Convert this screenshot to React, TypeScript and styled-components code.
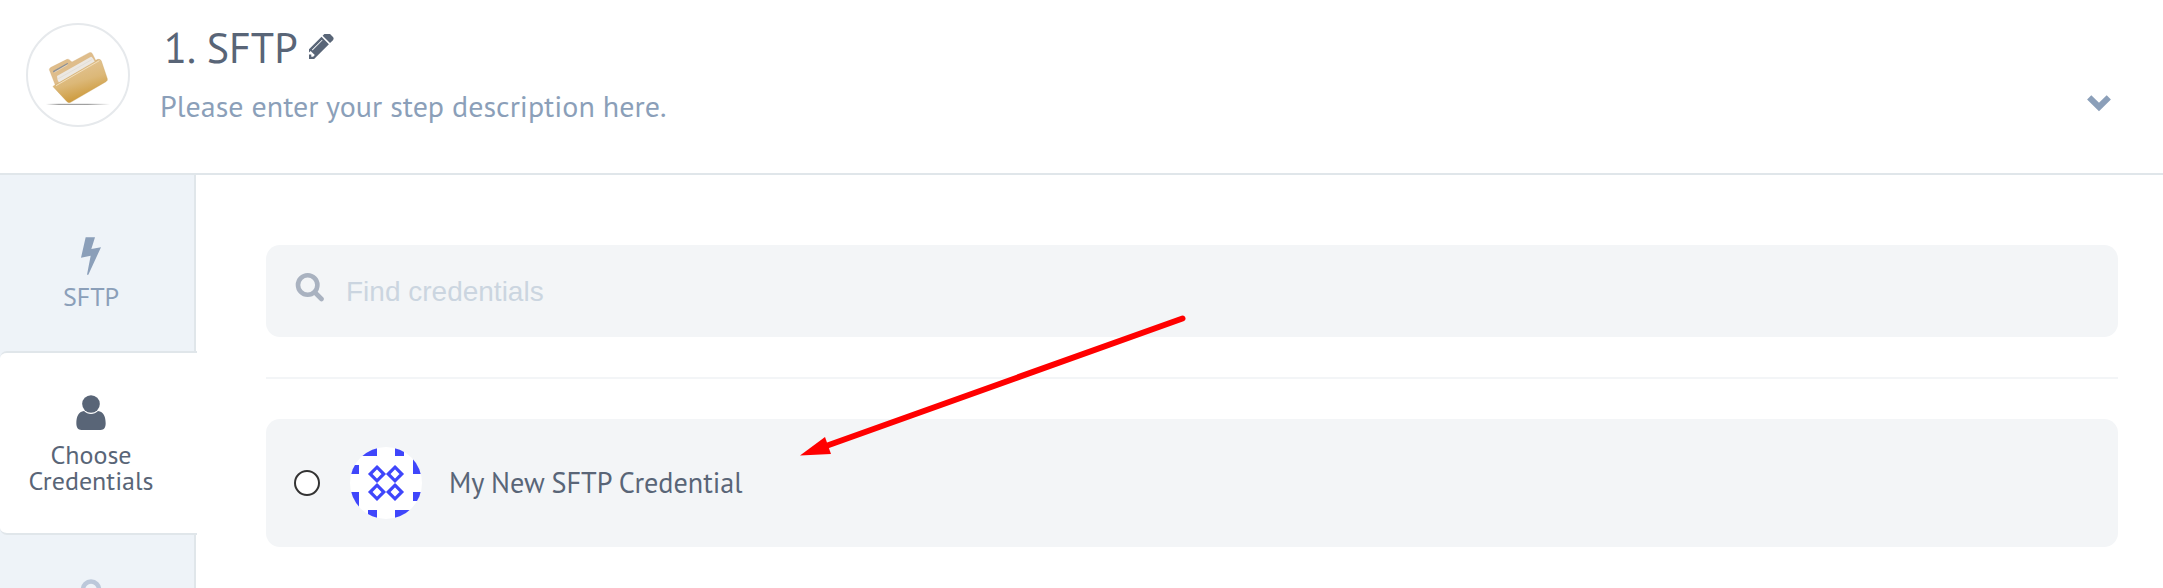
import React from "react";
import styled, { createGlobalStyle } from "styled-components";

const GlobalStyle = createGlobalStyle`
  *, *::before, *::after { box-sizing: border-box; }
  body { margin: 0; background: #fff; font-family: "PT Sans", "Noto Sans", sans-serif; }
`;

const Page = styled.div`
  position: relative;
  display: flex;
  flex-direction: column;
  height: 588px;
  overflow: hidden;
  background: #fff;
`;

const Header = styled.header`
  display: flex;
  align-items: flex-start;
  flex: none;
  height: 175px;
  padding: 23px 51px 0 26px;
  border-bottom: 2px solid #e0e6ea;
`;

const StepLogo = styled.div`
  display: flex;
  flex: none;
  width: 104px;
  height: 104px;
  padding: 25px 0 0 18px;
  border: 2px solid #e6e9ec;
  border-radius: 50%;
`;

const StepText = styled.div`
  flex: 1;
  padding-left: 30px;
`;

const TitleRow = styled.div`
  display: flex;
  height: 52px;
  padding-left: 4px;
`;

const Label = styled.span<{ $size: number; $line: number }>`
  display: block;
  font-size: ${(p) => p.$size}px;
  line-height: ${(p) => p.$line}px;
  white-space: nowrap;
`;

const Title = styled(Label)`
  width: 145px;
  color: #596577;
  word-spacing: 3px;
`;

const Description = styled(Label)`
  margin-top: 8px;
  color: #8b9fb9;
`;

const EditButton = styled.span`
  display: block;
  padding-top: 11px;
`;

const Toggle = styled.span`
  display: block;
  padding-top: 72px;
`;

const Body = styled.div`
  display: flex;
  flex: 1;
  min-height: 0;
`;

const Sidebar = styled.nav`
  display: flex;
  flex-direction: column;
  flex: none;
  width: 197px;
`;

const Tab = styled.div<{ $height: number; $top: number; $active?: boolean }>`
  display: flex;
  flex: none;
  flex-direction: column;
  align-items: center;
  width: ${(p) => (p.$active ? 197 : 196)}px;
  height: ${(p) => p.$height}px;
  padding: ${(p) => p.$top}px ${(p) => (p.$active ? 15 : 12)}px 0 0;
  background: ${(p) => (p.$active ? "#fff" : "#eef3f8")};
  color: ${(p) => (p.$active ? "#596577" : "#8b9fb9")};
  border: 0 solid #e0e6ea;
  border-width: ${(p) => (p.$active ? "2px 0" : "0 2px 0 0")};
  border-radius: ${(p) => (p.$active ? "7px 0 0 7px" : "0")};
`;

const TabLabel = styled(Label)<{ $gap: number }>`
  margin-top: ${(p) => p.$gap}px;
  text-align: center;
`;

const SidebarFill = styled.div`
  display: flex;
  flex-direction: column;
  background: linear-gradient(to right, #eef3f8 194px, #e0e6ea 194px, #e0e6ea 196px, #fff 196px);
`;

const Main = styled.main`
  display: flex;
  flex: 1;
  flex-direction: column;
  padding: 70px 45px 0 69px;
`;

const SearchBox = styled.label`
  display: flex;
  height: 92px;
  padding: 27px 29px 0;
  border-radius: 14px;
  background: #f3f5f7;
`;

const SearchInput = styled.input`
  flex: 1;
  height: 40px;
  margin-left: 21px;
  padding: 0;
  border: 0;
  outline: 0;
  background: transparent;
  font: 28px "Liberation Sans", Arial, sans-serif;
  &::placeholder { color: #cbd5e0; opacity: 1; }
`;

const Divider = styled.hr`
  width: 100%;
  height: 2px;
  margin: 40px 0;
  border: 0;
  background: #f3f5f7;
`;

const CredentialCard = styled.div`
  display: flex;
  align-items: center;
  height: 128px;
  padding-left: 28px;
  border-radius: 14px;
  background: #f3f5f7;
`;

const Radio = styled.span`
  width: 26px;
  height: 26px;
  margin-right: 30px;
  border: 2px solid #333;
  border-radius: 50%;
  background: #fff;
`;

const CredentialName = styled(Label)`
  margin-left: 27px;
  color: #596577;
`;

const Pointer = styled.svg`
  position: absolute;
  left: 780px;
  top: 300px;
  pointer-events: none;
`;

const FolderIcon = () => (
  <svg width="64" height="56" viewBox="138 150 192 168">
    <defs>
      <linearGradient id="front" x1="0.35" y1="0.1" x2="0.65" y2="0.9">
        <stop offset="0" stopColor="#e3c494" />
        <stop offset="0.5" stopColor="#dcb878" />
        <stop offset="1" stopColor="#cc9838" />
      </linearGradient>
      <linearGradient id="shade" x1="0" x2="1" y1="0" y2="0">
        <stop offset="0" stopColor="#888" stopOpacity="0" />
        <stop offset="0.2" stopColor="#8d8d8d" />
        <stop offset="0.65" stopColor="#8d8d8d" />
        <stop offset="1" stopColor="#888" stopOpacity="0" />
      </linearGradient>
    </defs>
    <rect x="138" y="311.500" width="192" height="3" fill="url(#shade)" />
    <path d="M148 209q0-4 5-7l48-24q6-2 10 4l5 4 52-28q6-2 9 3l10 20 8-4 4 10-130 76z" fill="#dfbd8b" stroke="#d0aa72" strokeWidth="1" />
    <path d="M160 212l42-23q4 0 1 4l-40 24q-6 0-3-5z" fill="#8d9095" />
    <path d="M163 217l40-23" stroke="#f2eee8" strokeWidth="1.5" />
    <path d="M171 228l102-58q4 0 12 16l-108 62q-6-8-6-20z" fill="#ece8e2" />
    <path d="M175 236l102-58" stroke="#d9d4cd" strokeWidth="1.5" />
    <path d="M160 258l135-79q6-3 9 4l18 53q2 5-4 9l-106 62q-6 3-11-2l-39-42q-4-3-2-5z" fill="url(#front)" stroke="#c9a05c" strokeWidth="1" />
    <path d="M168 257l130-75" stroke="#f2dfbd" strokeWidth="3" />
  </svg>
);

const PencilIcon = () => (
  <svg width="25" height="25" viewBox="256 256 1408 1408" fill="#596577">
    <path d="M491 1536l91-91-235-235-91 91v107h128v128h107zm523-928q0-22-22-22-10 0-17 7l-542 542q-7 7-7 17 0 22 22 22 10 0 17-7l542-542q7-7 7-17zm-54-192l416 416-832 832h-416v-416zm683 96q0 53-37 90l-166 166-416-416 166-165q36-38 90-38 53 0 91 38l235 234q37 39 37 91z" />
  </svg>
);

const ChevronIcon = () => (
  <svg width="26" height="18" viewBox="0 0 26 18">
    <path d="M3.200 2.400L13 12L22.800 2.400" fill="none" stroke="#8b9fb9" strokeWidth="6" />
  </svg>
);

const BoltIcon = () => (
  <svg width="20" height="38" viewBox="243 201 60 114">
    <path d="M257 201.500H285L274 237L303 231.500L265 314.500H261L272 257L243 263.500z" fill="#8b9fb9" />
  </svg>
);

const UserIcon = () => (
  <svg width="30" height="35" viewBox="228 75 90 105">
    <path d="M252 123C258 129 265 132 273 132S288 129 294 123C311 125 317 140 317 160C317 173 312 180 302 180H244C234 180 229 173 229 160C229 140 235 125 252 123Z" fill="#596577" />
    <circle cx="273" cy="102" r="26.500" fill="#596577" />
  </svg>
);

const SearchIcon = () => (
  <svg width="30" height="30" viewBox="0 0 30 30" fill="none" stroke="#a9b2c0" strokeLinecap="round">
    <circle cx="12.700" cy="13" r="9.700" strokeWidth="4.600" />
    <path d="M20 20.500L26.500 27" strokeWidth="4.600" />
  </svg>
);

const LockIcon = () => (
  <svg width="22" height="30" viewBox="0 0 22 30">
    <path d="M3 16V10.500a8 8 0 0 1 16 0V16" fill="none" stroke="#bcc8da" strokeWidth="4.500" />
  </svg>
);

const diamonds = [[27, 27], [45, 27], [27, 45], [45, 45]];
const squares = [[9, 0], [18, 0], [45, 0], [0, 18], [63, 9], [63, 18], [0, 45], [0, 54], [63, 45], [18, 63], [45, 63], [54, 63]];

const Identicon = () => (
  <svg width="72" height="72" viewBox="0 0 72 72">
    <clipPath id="avatar"><circle cx="36" cy="36" r="36" /></clipPath>
    <g clipPath="url(#avatar)">
      <rect width="72" height="72" fill="#fff" />
      {squares.map(([x, y]) => <rect key={`${x}-${y}`} x={x} y={y} width="9" height="9" fill="#3f46fb" />)}
      {diamonds.map(([x, y]) => (
        <path key={`${x}-${y}`} d={`M${x} ${y - 6.8}l6.800 6.800l-6.800 6.800l-6.800-6.800z`} fill="none" stroke="#3f46fb" strokeWidth="3.200" />
      ))}
    </g>
  </svg>
);

export default function App() {
  return (
    <Page>
      <GlobalStyle />
      <Header>
        <StepLogo><FolderIcon /></StepLogo>
        <StepText>
          <TitleRow>
            <Title $size={42} $line={50}>1. SFTP</Title>
            <EditButton><PencilIcon /></EditButton>
          </TitleRow>
          <Description $size={30} $line={46}>Please enter your step description here.</Description>
        </StepText>
        <Toggle><ChevronIcon /></Toggle>
      </Header>
      <Body>
        <Sidebar>
          <Tab $height={176} $top={62}>
            <BoltIcon />
            <TabLabel $size={26} $line={26} $gap={9}>SFTP</TabLabel>
          </Tab>
          <SidebarFill>
            <Tab $active $height={184} $top={42}>
              <UserIcon />
              <TabLabel $size={26} $line={26} $gap={12}>Choose<br />Credentials</TabLabel>
            </Tab>
          </SidebarFill>
          <Tab $height={176} $top={44}><LockIcon /></Tab>
        </Sidebar>
        <Main>
          <SearchBox>
            <SearchIcon />
            <SearchInput placeholder="Find credentials" />
          </SearchBox>
          <Divider />
          <CredentialCard>
            <Radio />
            <Identicon />
            <CredentialName $size={28.2} $line={40}>My New SFTP Credential</CredentialName>
          </CredentialCard>
        </Main>
      </Body>
      <Pointer width="420" height="170" viewBox="0 0 420 170" fill="#f00">
        <path d="M402.500 18.500L46 146" fill="none" stroke="#f00" strokeWidth="6" strokeLinecap="round" />
        <path d="M20 155.500L45 137L51 154z" />
      </Pointer>
    </Page>
  );
}
